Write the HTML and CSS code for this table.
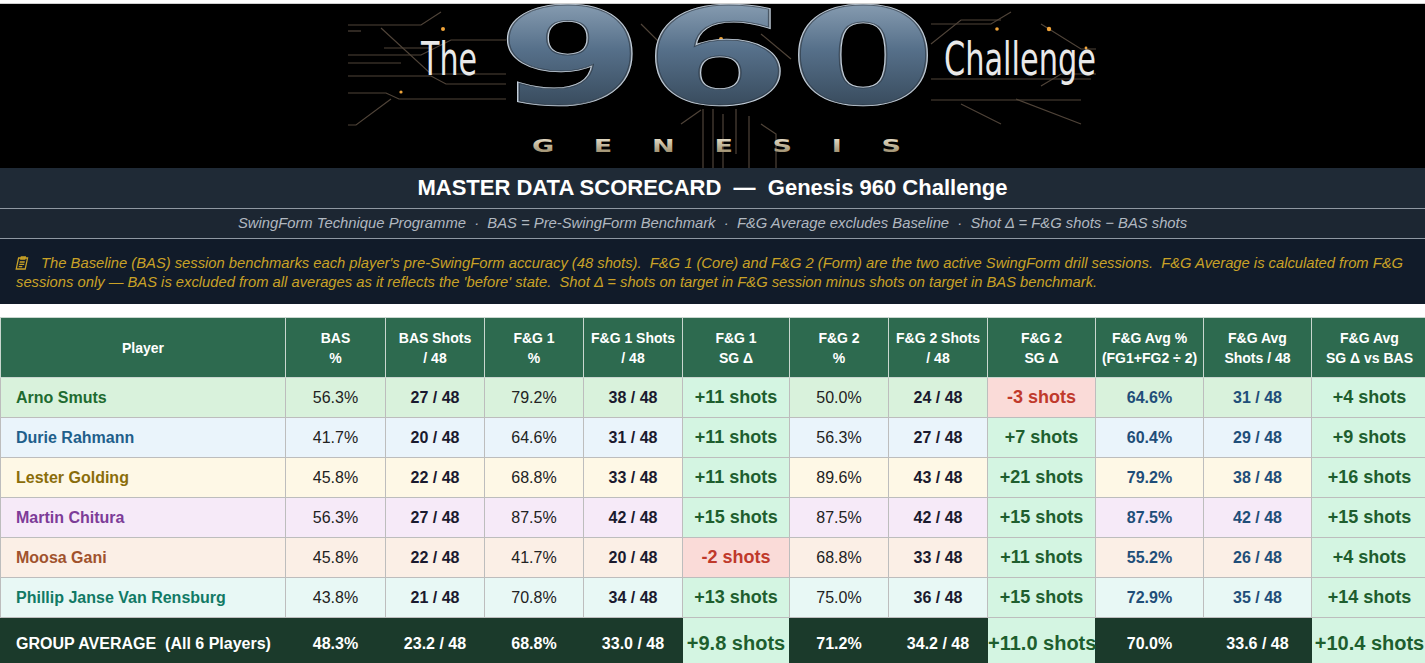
FILE: index.html
```html
<!DOCTYPE html>
<html lang="en">
<head>
<meta charset="utf-8">
<title>Genesis 960 Challenge — Master Data Scorecard</title>
<link rel="stylesheet" href="styles.css">
</head>
<body>
<div class="page">
  <div class="top-strip"></div>
  <div class="banner">
    <svg class="banner-art" width="1424" height="164" viewBox="0 0 1424 164" xmlns="http://www.w3.org/2000/svg">
      <defs>
        <linearGradient id="steel" x1="0" y1="0" x2="0" y2="1">
          <stop offset="0" stop-color="#9fb2c4"/>
          <stop offset="0.45" stop-color="#56708a"/>
          <stop offset="1" stop-color="#2a3947"/>
        </linearGradient>
        <linearGradient id="gold" x1="0" y1="0" x2="0" y2="1">
          <stop offset="0" stop-color="#f1ead6"/>
          <stop offset="1" stop-color="#8f7f5c"/>
        </linearGradient>
      </defs>
      <rect width="1424" height="164" fill="#000"/>
      <g fill="none" stroke="#5e5043" stroke-width="1.2" opacity="0.85">
        <path d="M347 21 H420 L440 8"/>
        <path d="M347 27 H360"/>
        <path d="M383 44 H430"/>
        <path d="M347 51 H420 L450 36 H505"/>
        <path d="M347 59 H400"/>
        <path d="M347 72 H430 L445 80 H505"/>
        <path d="M347 89 H385 L398 95 H505"/>
        <path d="M347 121 H355 L390 95"/>
        <path d="M380 24 L430 70 H505"/>
        <path d="M930 20 H990 L1010 8"/>
        <path d="M930 40 L960 16 H1000"/>
        <path d="M930 75 H1090"/>
        <path d="M930 96 H1080"/>
        <path d="M960 100 L1000 120"/>
        <path d="M1040 20 L1080 45 H1095"/>
        <path d="M1015 95 L1080 120"/>
        <path d="M1040 82 L1060 70 H1095"/>
        <path d="M702 105 V164"/>
        <path d="M712 105 V164"/>
        <path d="M722 110 V164"/>
        <path d="M735 105 V150"/>
        <path d="M748 112 V164"/>
        <path d="M680 120 L700 106"/>
        <path d="M760 120 L775 130 V164"/>
        <path d="M640 20 L660 40 H700"/>
        <path d="M760 30 L790 55"/>
      </g>
      <g fill="#f0a43a">
        <circle cx="442" cy="25" r="2"/>
        <circle cx="400" cy="88" r="1.6"/>
        <circle cx="996" cy="25" r="1.8"/>
        <circle cx="1048" cy="25" r="2.2"/>
        <circle cx="1085" cy="44" r="1.4"/>
        <circle cx="720" cy="35" r="2"/>
        <circle cx="906" cy="59" r="2"/>
        <circle cx="906" cy="72" r="2"/>
        <circle cx="527" cy="88" r="1.4"/>
        <circle cx="590" cy="88" r="1.4"/>
      </g>
      <text class="b-the" x="420" y="71" textLength="56" lengthAdjust="spacingAndGlyphs">The</text>
      <text class="b-960" x="497" y="99" textLength="438" lengthAdjust="spacingAndGlyphs">960</text>
      <text class="b-960-inner" x="497" y="99" textLength="438" lengthAdjust="spacingAndGlyphs">960</text>
      <text class="b-challenge" x="943" y="71" textLength="152" lengthAdjust="spacingAndGlyphs">Challenge</text>
      <text class="b-genesis" transform="scale(1.5 1)" x="354" y="148" textLength="246" lengthAdjust="spacing">GENESIS</text>
    </svg>
  </div>

  <header class="title-bar">MASTER DATA SCORECARD&nbsp; — &nbsp;Genesis 960 Challenge</header>
  <div class="subtitle">SwingForm Technique Programme &nbsp;·&nbsp; BAS = Pre-SwingForm Benchmark &nbsp;·&nbsp; F&amp;G Average excludes Baseline &nbsp;·&nbsp; Shot Δ = F&amp;G shots − BAS shots</div>
  <div class="note">
    <svg class="note-icon" width="12" height="14" viewBox="0 0 12 14" xmlns="http://www.w3.org/2000/svg">
      <g fill="none" stroke="#c9a227" stroke-width="1.3">
        <rect x="1.5" y="2" width="9" height="11"/>
        <path d="M4 1 H8 V3 H4 Z"/>
        <path d="M3.5 6 H8.5 M3.5 8.3 H8.5 M3.5 10.6 H7"/>
      </g>
    </svg>
    The Baseline (BAS) session benchmarks each player's pre-SwingForm accuracy (48 shots).&nbsp; F&amp;G 1 (Core) and F&amp;G 2 (Form) are the two active SwingForm drill sessions.&nbsp; F&amp;G Average is calculated from F&amp;G sessions only — BAS is excluded from all averages as it reflects the 'before' state.&nbsp; Shot Δ = shots on target in F&amp;G session minus shots on target in BAS benchmark.
  </div>

  <div class="gap"></div>

  <table class="score">
    <colgroup>
      <col class="c-player">
      <col class="c-100"><col class="c-99"><col class="c-99"><col class="c-99"><col class="c-107">
      <col class="c-99"><col class="c-99"><col class="c-108"><col class="c-108"><col class="c-108"><col class="c-116">
    </colgroup>
    <thead>
      <tr>
        <th>Player</th>
        <th>BAS<br>%</th>
        <th>BAS Shots<br>/ 48</th>
        <th>F&amp;G 1<br>%</th>
        <th>F&amp;G 1 Shots<br>/ 48</th>
        <th>F&amp;G 1<br>SG Δ</th>
        <th>F&amp;G 2<br>%</th>
        <th>F&amp;G 2 Shots<br>/ 48</th>
        <th>F&amp;G 2<br>SG Δ</th>
        <th>F&amp;G Avg %<br>(FG1+FG2 ÷ 2)</th>
        <th>F&amp;G Avg<br>Shots / 48</th>
        <th>F&amp;G Avg<br>SG Δ vs BAS</th>
      </tr>
    </thead>
    <tbody>
      <tr class="r-arno">
        <td class="name">Arno Smuts</td>
        <td class="pct">56.3%</td><td class="shots">27 / 48</td>
        <td class="pct">79.2%</td><td class="shots">38 / 48</td><td class="sg">+11 shots</td>
        <td class="pct">50.0%</td><td class="shots">24 / 48</td><td class="sg neg">-3 shots</td>
        <td class="avg">64.6%</td><td class="avg">31 / 48</td><td class="sg">+4 shots</td>
      </tr>
      <tr class="r-durie">
        <td class="name">Durie Rahmann</td>
        <td class="pct">41.7%</td><td class="shots">20 / 48</td>
        <td class="pct">64.6%</td><td class="shots">31 / 48</td><td class="sg">+11 shots</td>
        <td class="pct">56.3%</td><td class="shots">27 / 48</td><td class="sg">+7 shots</td>
        <td class="avg">60.4%</td><td class="avg">29 / 48</td><td class="sg">+9 shots</td>
      </tr>
      <tr class="r-lester">
        <td class="name">Lester Golding</td>
        <td class="pct">45.8%</td><td class="shots">22 / 48</td>
        <td class="pct">68.8%</td><td class="shots">33 / 48</td><td class="sg">+11 shots</td>
        <td class="pct">89.6%</td><td class="shots">43 / 48</td><td class="sg">+21 shots</td>
        <td class="avg">79.2%</td><td class="avg">38 / 48</td><td class="sg">+16 shots</td>
      </tr>
      <tr class="r-martin">
        <td class="name">Martin Chitura</td>
        <td class="pct">56.3%</td><td class="shots">27 / 48</td>
        <td class="pct">87.5%</td><td class="shots">42 / 48</td><td class="sg">+15 shots</td>
        <td class="pct">87.5%</td><td class="shots">42 / 48</td><td class="sg">+15 shots</td>
        <td class="avg">87.5%</td><td class="avg">42 / 48</td><td class="sg">+15 shots</td>
      </tr>
      <tr class="r-moosa">
        <td class="name">Moosa Gani</td>
        <td class="pct">45.8%</td><td class="shots">22 / 48</td>
        <td class="pct">41.7%</td><td class="shots">20 / 48</td><td class="sg neg">-2 shots</td>
        <td class="pct">68.8%</td><td class="shots">33 / 48</td><td class="sg">+11 shots</td>
        <td class="avg">55.2%</td><td class="avg">26 / 48</td><td class="sg">+4 shots</td>
      </tr>
      <tr class="r-phillip">
        <td class="name">Phillip Janse Van Rensburg</td>
        <td class="pct">43.8%</td><td class="shots">21 / 48</td>
        <td class="pct">70.8%</td><td class="shots">34 / 48</td><td class="sg">+13 shots</td>
        <td class="pct">75.0%</td><td class="shots">36 / 48</td><td class="sg">+15 shots</td>
        <td class="avg">72.9%</td><td class="avg">35 / 48</td><td class="sg">+14 shots</td>
      </tr>
      <tr class="r-group">
        <td class="name">GROUP AVERAGE&nbsp; (All 6 Players)</td>
        <td>48.3%</td><td>23.2 / 48</td>
        <td>68.8%</td><td>33.0 / 48</td><td class="sg">+9.8 shots</td>
        <td>71.2%</td><td>34.2 / 48</td><td class="sg">+11.0 shots</td>
        <td>70.0%</td><td>33.6 / 48</td><td class="sg">+10.4 shots</td>
      </tr>
    </tbody>
  </table>
</div>
</body>
</html>
```

FILE: styles.css
```css
* { box-sizing: border-box; }

html, body {
  margin: 0;
  padding: 0;
  background: #ffffff;
  overflow: hidden;
}

body {
  font-family: "Liberation Sans", Arial, sans-serif;
  width: 1425px;
}

.page {
  width: 1425px;
  overflow: hidden;
}

.top-strip {
  height: 4px;
  background: #ffffff;
  border-bottom: 1px solid #cfcfcf;
}

.banner {
  height: 164px;
  background: #000;
  padding-left: 1px;
  display: flex;
}

.banner-art {
  display: block;
}

.b-the,
.b-challenge {
  font-family: "Liberation Sans Narrow", "DejaVu Sans Condensed", "Liberation Sans", sans-serif;
  font-size: 46px;
  fill: #e9e9e9;
}

.b-960 {
  font-family: "DejaVu Sans", sans-serif;
  font-weight: bold;
  font-size: 132px;
  fill: url(#steel);
  stroke: #c3cfdb;
  stroke-width: 2.5px;
  paint-order: stroke;
}

.b-960-inner {
  font-family: "DejaVu Sans", sans-serif;
  font-weight: bold;
  font-size: 132px;
  fill: none;
  stroke: #1c2631;
  stroke-width: 1px;
  opacity: 0.6;
}

.b-genesis {
  font-family: "DejaVu Sans", sans-serif;
  font-weight: bold;
  font-size: 18px;
  fill: url(#gold);
}

.title-bar {
  height: 41px;
  line-height: 40px;
  background: #1f2a36;
  color: #ffffff;
  font-weight: bold;
  font-size: 22px;
  text-align: center;
  border-bottom: 1px solid #8f98a2;
}

.subtitle {
  height: 30px;
  line-height: 29px;
  background: #1c2632;
  color: #b1b8c0;
  font-style: italic;
  font-size: 14.8px;
  text-align: center;
  border-bottom: 1px solid #8f98a2;
}

.note {
  height: 65px;
  padding: 15px 15px 0 16px;
  background: #111b29;
  color: #c9a227;
  font-style: italic;
  font-size: 14.75px;
  line-height: 19px;
}

.note-icon {
  display: inline-block;
  vertical-align: -2px;
  transform: skewX(-12deg);
  margin-right: 9px;
}

.gap {
  height: 13px;
  background: #ffffff;
}

.score {
  border-collapse: collapse;
  table-layout: fixed;
  width: 1427px;
}

.c-player { width: 285px; }
.c-99 { width: 99px; }
.c-100 { width: 100px; }
.c-107 { width: 107px; }
.c-108 { width: 108px; }
.c-116 { width: 116px; }

.score th,
.score td {
  border: 1px solid #bdbdbd;
  padding: 0;
  text-align: center;
  white-space: nowrap;
}

.score th {
  height: 60px;
  background: #2d6a4f;
  color: #ffffff;
  font-size: 14px;
  font-weight: bold;
  line-height: 20px;
  border-color: #c9d6cf;
}

.score td {
  height: 40px;
  font-size: 16px;
  color: #222;
}

.score td.name {
  text-align: left;
  padding-left: 15px;
  font-weight: bold;
}

.score td.shots {
  font-weight: bold;
  color: #1a1a2e;
}

.score td.avg {
  font-weight: bold;
  color: #1f4e79;
}

.score td.sg {
  background: #d4f5e2;
  color: #1e5e2e;
  font-weight: bold;
  font-size: 18px;
}

.score td.sg.neg {
  background: #fadbd8;
  color: #c0392b;
}

.r-arno td { background: #d9f2dc; }
.r-arno td.name { color: #1e6b30; }

.r-durie td { background: #eaf4fb; }
.r-durie td.name { color: #1f5f8b; }

.r-lester td { background: #fef8e6; }
.r-lester td.name { color: #8a6d0a; }

.r-martin td { background: #f6eaf8; }
.r-martin td.name { color: #7d3c98; }

.r-moosa td { background: #fbefe6; }
.r-moosa td.name { color: #a0522d; }

.r-phillip td { background: #e8f8f5; }
.r-phillip td.name { color: #117a65; }

.r-group td {
  height: 52px;
  background: #1b3a2b;
  color: #ffffff;
  font-weight: bold;
  font-size: 16px;
  border-color: #1b3a2b;
}

.r-group td.name {
  color: #ffffff;
}

.r-group td.sg {
  background: #d4f5e2;
  color: #1e5e2e;
  font-size: 20px;
  overflow: visible;
}
```
